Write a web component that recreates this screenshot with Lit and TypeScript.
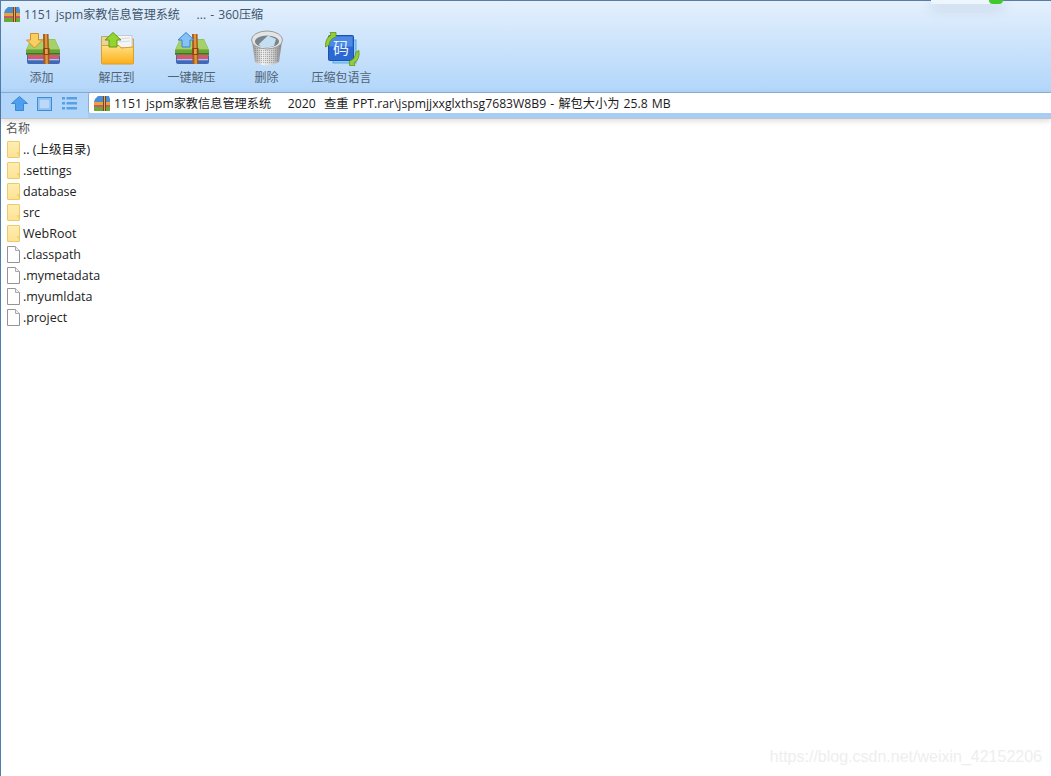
import { LitElement, html, css, svg } from "lit";
import { customElement } from "lit/decorators.js";

const book = (x: number) => svg`
  <g transform="translate(${x} 9)">
    <path d="M1 15 L33 15 L34 17 L34 23 Q34 25 32 25 L3 25 Q1 25 1 23 Z" fill="#3f68b8"/>
    <rect x="2" y="14" width="31" height="6" fill="#d85673"/>
    <rect x="2" y="14.500" width="31" height="1.5" fill="#f3a8b8"/>
    <rect x="2" y="20" width="31" height="1.300" fill="#a9c4ec"/>
    <path d="M5 0 L29 0 L34 11 L34 15 Q34 16 33 16 L1 16 Q0 16 0 15 L0 11 Z" fill="#7fb848"/>
    <path d="M5 0.500 L29 0.500 L33 10 L1 10 Z" fill="#a6d06a"/>
    <rect x="0" y="11" width="34" height="3" fill="#6ea33a"/>
    <rect x="0" y="14" width="34" height="1.600" fill="#40751f"/>
    <path d="M17 -5 L22.500 -5 L23.500 25 L17.500 25 Z" fill="#a85a18"/>
    <path d="M18.800 -5 L21 -5 L22 25 L19.500 25 Z" fill="#dc9644"/>
    <rect x="17.200" y="9" width="6.300" height="7" fill="#8a4710"/>
    <rect x="19" y="10" width="2.800" height="5" fill="#e4a050"/>
  </g>`;

const addIcon = svg`<svg width="40" height="38" viewBox="0 0 40 38">${book(4)}
  <path d="M8.500 3.500 L16.500 3.500 L16.500 10 L20.500 10 L12.500 18 L4.500 10 L8.500 10 Z" fill="#f9cf62" stroke="#d98c24"/></svg>`;

const oneKeyIcon = svg`<svg width="40" height="38" viewBox="0 0 40 38">${book(3)}
  <path d="M14 2.500 L22 10 L18 10 L18 17 L10 17 L10 10 L6 10 Z" fill="#84c2f7" stroke="#3c82d2"/></svg>`;

const extractIcon = svg`<svg width="40" height="38" viewBox="0 0 40 38">
  <defs><linearGradient id="fo" x1="0" y1="0" x2="0" y2="1"><stop offset="0" stop-color="#ffe184"/><stop offset="1" stop-color="#fcae18"/></linearGradient></defs>
  <path d="M4.500 6.500 L13 6.500 L15 9 L36.500 9 L36.500 20 L4.500 20 Z" fill="#e9d49a" stroke="#c9a35a"/>
  <rect x="14" y="5.500" width="21" height="12" fill="#f4f5f6" stroke="#c8ccd0"/>
  <path d="M21 9 L33 8 M22 12 L33 11" stroke="#d8dce0"/>
  <path d="M4.500 15.500 L22 15.500 L24 18 L36.500 17 L36.500 33 Q36.500 34 35.500 34 L5.500 34 Q4.500 34 4.500 33 Z" fill="url(#fo)" stroke="#dd9e2c"/>
  <path d="M16 2.500 L24 10 L20 10 L20 17 L12 17 L12 10 L8 10 Z" fill="#94d42e" stroke="#629c18"/>
</svg>`;

const trashIcon = svg`<svg width="40" height="38" viewBox="0 0 40 38">
  <defs>
    <linearGradient id="tr" x1="0" y1="0" x2="1" y2="0"><stop offset="0" stop-color="#8f8f8f"/><stop offset=".35" stop-color="#f2f2f2"/><stop offset=".7" stop-color="#d0d0d0"/><stop offset="1" stop-color="#808080"/></linearGradient>
    <pattern id="holes" width="2" height="2" patternUnits="userSpaceOnUse"><rect width="1.100" height="1.100" fill="#777" opacity=".55"/></pattern>
  </defs>
  <path d="M5 11 L8 32 Q20 39 32 32 L35 11 Z" fill="url(#tr)"/>
  <path d="M7 15 L9 31 Q20 37 31 31 L33 15 Q20 22 7 15 Z" fill="url(#holes)"/>
  <ellipse cx="20" cy="10" rx="15.500" ry="9" fill="#e4e4e4" stroke="#9c9c9c"/>
  <ellipse cx="20" cy="11.500" rx="12" ry="6" fill="#77848e"/>
  <path d="M12 14 L21 5.500 L29 9 L27 16 Q20 18.500 13 16.500 Z" fill="#c4dff2"/>
</svg>`;

const langIcon = svg`<svg width="40" height="38" viewBox="0 0 40 38">
  <rect x="11" y="10" width="23" height="23" fill="#8ed0f8" stroke="#5aa8e4"/>
  <rect x="6.500" y="5.500" width="25" height="25" rx="1" fill="#2c68d2" stroke="#1e50ae"/>
  <rect x="7.500" y="6.500" width="23" height="10" fill="#4c8ae6"/>
  <text x="19" y="24" text-anchor="middle" font-size="16" fill="#e8f2ff" font-family="Noto Sans CJK SC, sans-serif">码</text>
  <path d="M14 2.500 L14 7 Q8 8 7 15 L3.500 17 Q3 8 9 5 L8 2.500 Z" fill="#94cc3a" stroke="#5e961a" stroke-width=".8"/>
  <path d="M27.500 35.500 L27.500 31 Q33 30 34 22 L37 20.500 Q38 30 32 33 L33 35.500 Z" fill="#94cc3a" stroke="#5e961a" stroke-width=".8"/>
</svg>`;

const smallArchive = svg`<svg width="16" height="15" viewBox="0 0 16 15" class="sm">
  <path d="M1 3 L4 0 L15 0 L16 3 L16 6 L0 6 Z" fill="#4a8ed8"/>
  <rect x="0" y="6" width="16" height="3" fill="#e8a43a"/>
  <rect x="0" y="9" width="16" height="2" fill="#c8586a"/>
  <rect x="0" y="11" width="16" height="4" fill="#6aa838"/>
  <rect x="9" y="0" width="3" height="15" fill="#7c4515"/>
  <rect x="10" y="0" width="1" height="15" fill="#e0a860"/>
</svg>`;

const folder = svg`<svg width="13" height="17" viewBox="0 0 13 17">
  <defs><linearGradient id="fd" x1="0" y1="0" x2="0" y2="1"><stop offset="0" stop-color="#fdeeb4"/><stop offset="1" stop-color="#fde294"/></linearGradient></defs>
  <path d="M.5 1 Q.5 .5 1 .5 L12 .5 Q12.500 .5 12.500 1 L12.500 16 Q12.500 16.500 12 16.500 L1 16.500 Q.5 16.500 .5 16 Z" fill="url(#fd)" stroke="#eecb68"/>
  <path d="M9.500 11.500 L12 11 L12 15 Z" fill="#f2d27a"/>
</svg>`;

const file = svg`<svg width="13" height="17" viewBox="0 0 13 17">
  <path d="M.5 .5 L8.500 .5 L12.500 4.500 L12.500 16.500 L.5 16.500 Z" fill="#fff" stroke="#949494"/>
  <path d="M8.500 .5 L8.500 4.500 L12.500 4.500" fill="#efefef" stroke="#aaa"/>
</svg>`;

const upArrow = svg`<svg width="17" height="15" viewBox="0 0 17 15">
  <path d="M8.500 .5 L16.500 7.500 L12.500 7.500 L12.500 14.500 L4.500 14.500 L4.500 7.500 L.5 7.500 Z" fill="#4e9fec" stroke="#3a86d8"/></svg>`;
const viewIcon = svg`<svg width="15" height="14" viewBox="0 0 15 14">
  <rect x=".5" y=".5" width="14" height="13" fill="#a8d0f4" stroke="#3d8cdc"/>
  <rect x="2" y="2" width="11" height="10" fill="#bcdaf7" stroke="#7cb2e8"/></svg>`;
const listIcon = svg`<svg width="15" height="13" viewBox="0 0 15 13" fill="#5a9fe2">
  <rect x="0" y="0" width="3" height="2.500"/><rect x="4.500" y="0" width="10.500" height="2.500"/>
  <rect x="0" y="5" width="3" height="2.500"/><rect x="4.500" y="5" width="10.500" height="2.500"/>
  <rect x="0" y="10" width="3" height="2.500"/><rect x="4.500" y="10" width="10.500" height="2.500"/></svg>`;

const tools = [
  { label: "添加", icon: addIcon },
  { label: "解压到", icon: extractIcon },
  { label: "一键解压", icon: oneKeyIcon },
  { label: "删除", icon: trashIcon },
  { label: "压缩包语言", icon: langIcon },
];

const rows: [string, boolean][] = [
  [".. (上级目录)", true],
  [".settings", true],
  ["database", true],
  ["src", true],
  ["WebRoot", true],
  [".classpath", false],
  [".mymetadata", false],
  [".myumldata", false],
  [".project", false],
];

@customElement("app-root")
export class AppRoot extends LitElement {
  static styles = css`
    :host {
      display: block;
      position: relative;
      width: 1051px;
      height: 776px;
      overflow: hidden;
      background: #fff;
      font-family: "Open Sans", "Noto Sans CJK SC", sans-serif;
      font-size: 12px;
    }
    .frame {
      display: flex;
      flex-direction: column;
      height: 100%;
      border-left: 1px solid #4f7eaa;
      box-sizing: border-box;
    }
    .chrome {
      border-top: 1px solid #5a7ea3;
      background: linear-gradient(#e4f0fd, #b2d6fa);
      height: 92px;
      box-sizing: border-box;
      flex: none;
    }
    .title {
      display: flex;
      align-items: center;
      height: 26px;
      padding-left: 3px;
      gap: 4px;
      color: #3f5569;
      white-space: pre;
      font-size: 12.1px;
      word-spacing: 1px;
    }
    .tools {
      display: flex;
      padding: 3px 0 0 3px;
    }
    .tool {
      width: 75px;
      display: flex;
      flex-direction: column;
      align-items: center;
      color: #4f6274;
      font-size: 12px;
      line-height: 16px;
      white-space: nowrap;
    }
    .ico {
      height: 38px;
      margin-bottom: 2px;
    }
    .addr {
      flex: none;
      height: 27px;
      display: flex;
      background: #a8cdf4;
      border-top: 1px solid #88aace;
      box-sizing: border-box;
      border-bottom: 1px solid #c4c4c4;
      box-shadow: 0 2px 6px rgba(0, 0, 0, 0.14);
    }
    .nav {
      width: 87px;
      flex: none;
      display: flex;
      align-items: center;
      padding: 0 0 4px 10px;
      box-sizing: border-box;
      background: #b2d6fa;
    }
    .nav svg:nth-child(2) { margin-left: 9px; }
    .nav svg:nth-child(3) { margin-left: 10px; }
    .path {
      flex: 1;
      height: 20px;
      background: #fff;
      display: flex;
      align-items: center;
      gap: 4px;
      padding-left: 5px;
      color: #1a1a1a;
      white-space: pre;
      font-size: 12.2px;
      word-spacing: 1px;
      border-left: 1px solid #8aaed4;
      border-radius: 2px 0 0 2px;
    }
    .head {
      flex: none;
      height: 20px;
      padding-left: 5px;
      line-height: 19px;
      color: #555;
    }
    .row {
      display: flex;
      align-items: center;
      height: 21px;
      padding-left: 6px;
      gap: 3px;
      color: #222;
      font-size: 12.5px;
      line-height: 16px;
      white-space: nowrap;
    }
    .row svg { flex: none; }
    .popup {
      position: absolute;
      top: 0;
      left: 931px;
      width: 72px;
      height: 4px;
      background: #eef6fd;
      border-radius: 0 0 2px 2px;
      box-shadow: 0 4px 12px rgba(60, 80, 110, 0.28);
    }
    .popup i {
      position: absolute;
      right: 0;
      top: 0;
      width: 14px;
      height: 4px;
      background: #3fc92a;
      border-radius: 0 0 6px 6px;
    }
    .mark {
      position: absolute;
      right: 9px;
      top: 748px;
      font-family: "Liberation Sans", sans-serif;
      font-size: 16px;
      color: #eeeeee;
    }
  `;

  render() {
    return html`
      <div class="frame">
        <div class="chrome">
          <div class="title">
            ${smallArchive}<span>1151 jspm家教信息管理系统    ... - 360压缩</span>
          </div>
          <div class="tools">
            ${tools.map(
              (t) => html`<div class="tool">
                <div class="ico">${t.icon}</div>
                ${t.label}
              </div>`
            )}
          </div>
        </div>
        <div class="addr">
          <div class="nav">${upArrow}${viewIcon}${listIcon}</div>
          <div class="path">
            ${smallArchive}<span>1151 jspm家教信息管理系统    2020  查重 PPT.rar\\jspmjjxxglxthsg7683W8B9 - 解包大小为 25.8 MB</span>
          </div>
        </div>
        <div class="head">名称</div>
        <div class="list">
          ${rows.map(
            ([name, isDir]) => html`<div class="row">
              ${isDir ? folder : file}<span>${name}</span>
            </div>`
          )}
        </div>
      </div>
      <div class="popup"><i></i></div>
      <div class="mark">https://blog.csdn.net/weixin_42152206</div>
    `;
  }
}
